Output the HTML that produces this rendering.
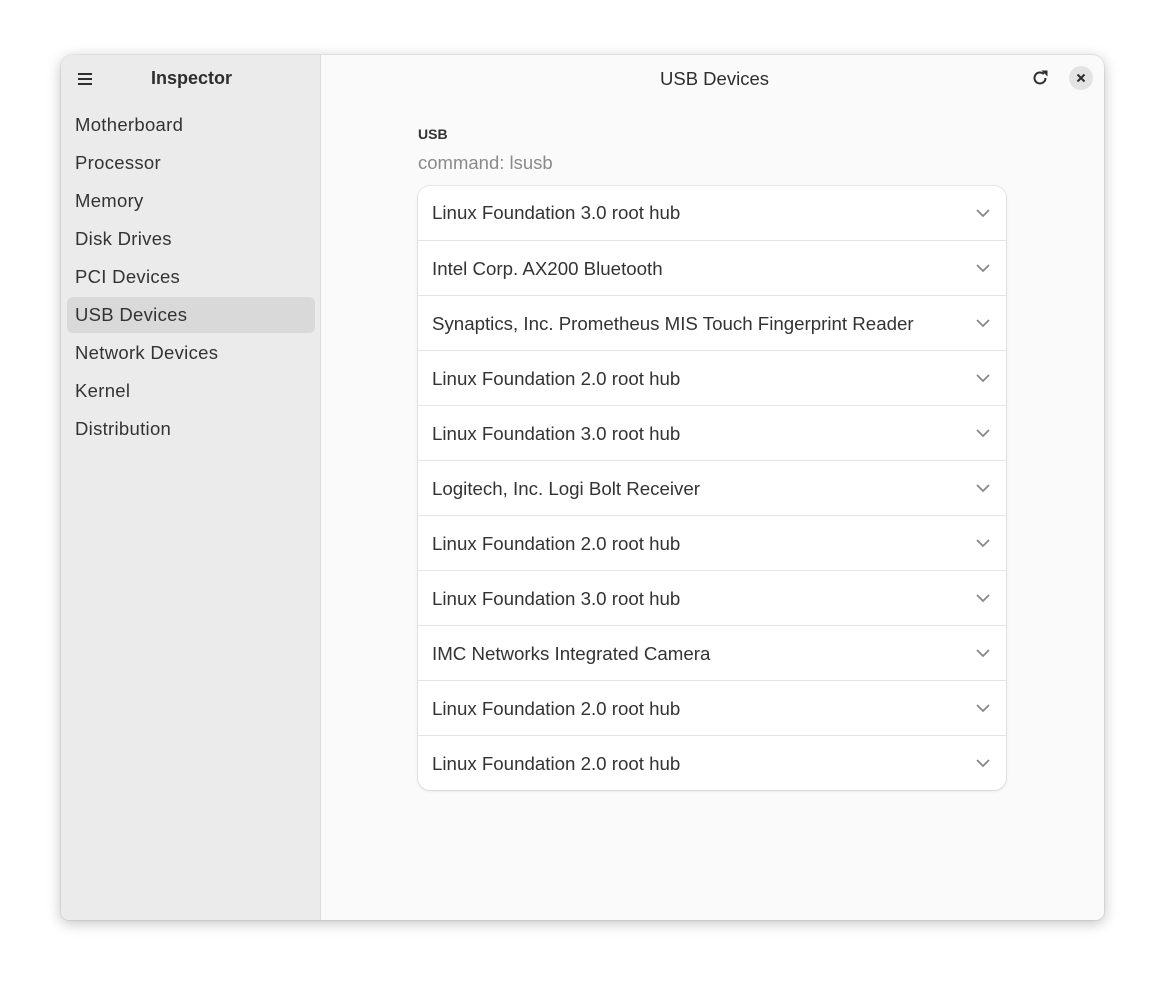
<!DOCTYPE html>
<html><head><style>
body{margin:0;width:1165px;height:987px;background:#fff;font-family:"Liberation Sans",sans-serif;position:relative;overflow:hidden}
.win{position:absolute;left:61px;top:55px;width:1043px;height:865px;border-radius:12px 12px 8px 8px;background:#fafafa;box-shadow:0 3px 14px rgba(0,0,0,.25),0 0 0 1px rgba(0,0,0,.06);overflow:hidden}
.side{position:absolute;left:0;top:0;width:259px;height:100%;background:#ebebeb;border-right:1px solid #dcdcdc}
.title{position:absolute;top:13px;font-weight:bold;font-size:18px;color:#2e2e2e}
.item{position:absolute;left:6px;width:248px;height:36px;line-height:36px;padding-left:8px;box-sizing:border-box;font-size:18.5px;letter-spacing:0.3px;color:#333;border-radius:6px}
.sel{background:#d9d9d9}
.list{position:absolute;left:357px;top:131px;width:588px;background:#fff;border-radius:12px;box-shadow:0 0 0 1px rgba(0,0,0,.06),0 1px 3px rgba(0,0,0,.1)}
.row{height:55px;line-height:55px;padding-left:14px;font-size:18.7px;color:#333;border-top:1px solid #e6e6e6;position:relative;box-sizing:border-box}
.row:first-child{border-top:none;height:54px;line-height:54px}
.row svg{position:absolute;right:16px;top:23px}
</style></head><body>
<div class="win">
<div class="side">
<svg style="position:absolute;left:16px;top:17px" width="16" height="14"><path d="M1 2h14M1 7h14M1 12h14" stroke="#2e2e2e" stroke-width="2"/></svg>
<div class="title" style="left:90px">Inspector</div>
<div class="item" style="top:52px">Motherboard</div>
<div class="item" style="top:90px">Processor</div>
<div class="item" style="top:128px">Memory</div>
<div class="item" style="top:166px">Disk Drives</div>
<div class="item" style="top:204px">PCI Devices</div>
<div class="item sel" style="top:242px">USB Devices</div>
<div class="item" style="top:280px">Network Devices</div>
<div class="item" style="top:318px">Kernel</div>
<div class="item" style="top:356px">Distribution</div>
</div>
<div class="title" style="left:599px;font-weight:normal;font-size:18.5px">USB Devices</div>
<svg style="position:absolute;left:970px;top:14px" width="18" height="18" viewBox="0 0 18 18"><path d="M14.5 9A5.5 5.5 0 1 1 12.8 5" fill="none" stroke="#2e2e2e" stroke-width="2"/><path d="M10.5 1.5h6v6z" fill="#2e2e2e"/></svg>
<div style="position:absolute;left:1008px;top:11px;width:24px;height:24px;border-radius:50%;background:#e3e3e3"></div>
<svg style="position:absolute;left:1015px;top:18px" width="10" height="10"><path d="M1.5 1.5l7 7M8.5 1.5l-7 7" stroke="#2e2e2e" stroke-width="2"/></svg>
<div style="position:absolute;left:357px;top:71px;font-weight:bold;font-size:14px;color:#333">USB</div>
<div style="position:absolute;left:357px;top:97px;font-size:18.5px;color:#8a8a8a">command: lsusb</div>
<div class="list">
<div class="row">Linux Foundation 3.0 root hub<svg width="14" height="9"><path d="M1 1l6 6 6-6" fill="none" stroke="#888" stroke-width="1.8"/></svg></div>
<div class="row">Intel Corp. AX200 Bluetooth<svg width="14" height="9"><path d="M1 1l6 6 6-6" fill="none" stroke="#888" stroke-width="1.8"/></svg></div>
<div class="row">Synaptics, Inc. Prometheus MIS Touch Fingerprint Reader<svg width="14" height="9"><path d="M1 1l6 6 6-6" fill="none" stroke="#888" stroke-width="1.8"/></svg></div>
<div class="row">Linux Foundation 2.0 root hub<svg width="14" height="9"><path d="M1 1l6 6 6-6" fill="none" stroke="#888" stroke-width="1.8"/></svg></div>
<div class="row">Linux Foundation 3.0 root hub<svg width="14" height="9"><path d="M1 1l6 6 6-6" fill="none" stroke="#888" stroke-width="1.8"/></svg></div>
<div class="row">Logitech, Inc. Logi Bolt Receiver<svg width="14" height="9"><path d="M1 1l6 6 6-6" fill="none" stroke="#888" stroke-width="1.8"/></svg></div>
<div class="row">Linux Foundation 2.0 root hub<svg width="14" height="9"><path d="M1 1l6 6 6-6" fill="none" stroke="#888" stroke-width="1.8"/></svg></div>
<div class="row">Linux Foundation 3.0 root hub<svg width="14" height="9"><path d="M1 1l6 6 6-6" fill="none" stroke="#888" stroke-width="1.8"/></svg></div>
<div class="row">IMC Networks Integrated Camera<svg width="14" height="9"><path d="M1 1l6 6 6-6" fill="none" stroke="#888" stroke-width="1.8"/></svg></div>
<div class="row">Linux Foundation 2.0 root hub<svg width="14" height="9"><path d="M1 1l6 6 6-6" fill="none" stroke="#888" stroke-width="1.8"/></svg></div>
<div class="row">Linux Foundation 2.0 root hub<svg width="14" height="9"><path d="M1 1l6 6 6-6" fill="none" stroke="#888" stroke-width="1.8"/></svg></div>
</div>
</div>
</body></html>
